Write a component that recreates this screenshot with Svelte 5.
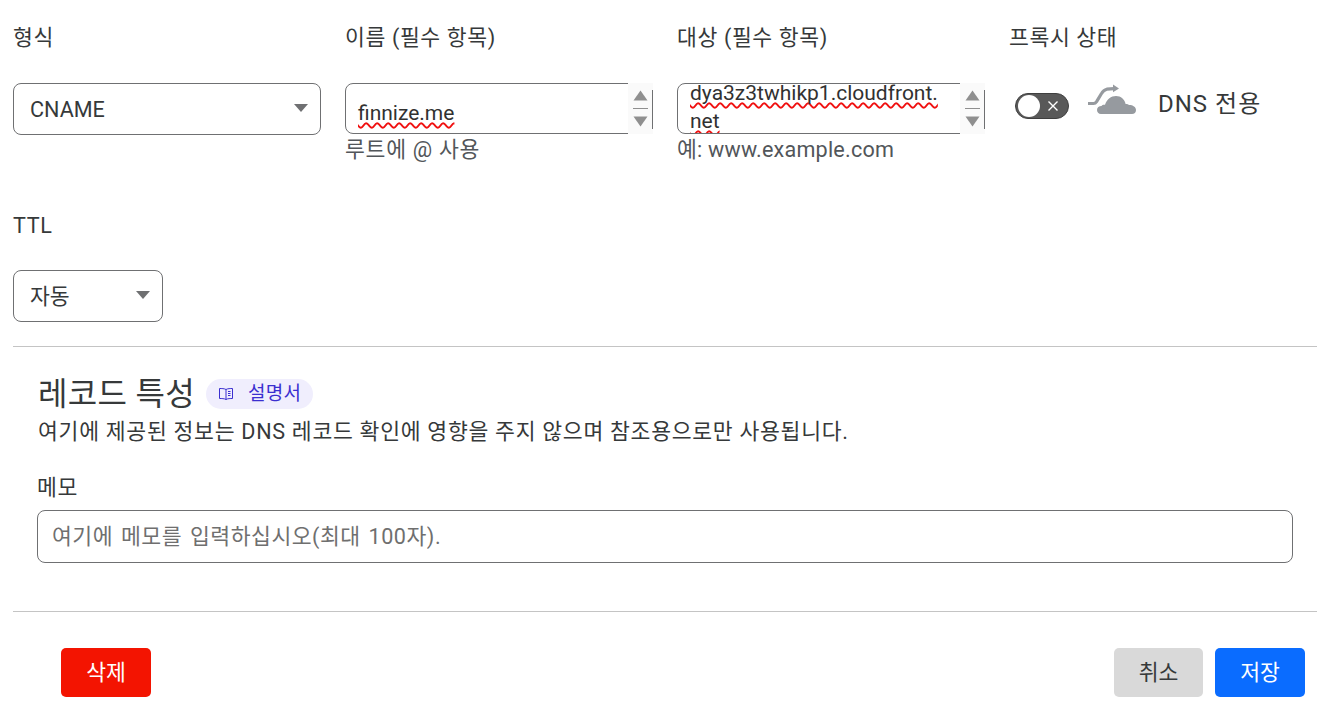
<script>
	let name = $state('finnize.me');
	let target = $state('dya3z3twhikp1.cloudfront.net');
	let type = $state('CNAME');
	let ttl = $state('자동');
	let comment = $state('');
	let proxied = $state(false);
</script>

{#snippet spinner()}
	<div class="spin">
		<svg width="15" height="11" viewBox="0 0 15 11"><path d="M7.5 0.5 14.5 10.5H0.5Z" fill="#8f8f8f" /></svg>
		<span class="spin-line"></span>
		<svg width="15" height="11" viewBox="0 0 15 11"><path d="M0.5 0.5H14.5L7.5 10.5Z" fill="#8f8f8f" /></svg>
	</div>
{/snippet}

{#snippet caret()}
	<svg class="caret" width="14" height="8" viewBox="0 0 14 8"><path d="M0 0H14L7 8Z" fill="#6f7072" /></svg>
{/snippet}

<div class="page">
	<div class="fields">
		<div class="field">
			<div class="label">형식</div>
			<div class="select wide">
				<select bind:value={type}>
					<option>CNAME</option>
					<option>A</option>
					<option>AAAA</option>
				</select>
				{@render caret()}
			</div>
		</div>
		<div class="field">
			<div class="label">이름 (필수 항목)</div>
			<div class="area">
				<div class="area-text single">{name}</div>
				{@render spinner()}
			</div>
			<div class="hint ko">루트에 @ 사용</div>
		</div>
		<div class="field">
			<div class="label">대상 (필수 항목)</div>
			<div class="area">
				<div class="area-text double">{target}</div>
				{@render spinner()}
			</div>
			<div class="hint">예: www.example.com</div>
		</div>
		<div class="field">
			<div class="label">프록시 상태</div>
			<div class="proxy">
				<button class="toggle" aria-label="프록시 상태" onclick={() => (proxied = !proxied)}>
					<span class="knob"></span>
					<svg width="12" height="12" viewBox="0 0 12 12"><path d="M1.5 1.5 10.5 10.5M10.5 1.5 1.5 10.5" stroke="#fff" stroke-width="1.4" /></svg>
				</button>
				<svg class="cloud" width="50" height="32" viewBox="0 0 50 32">
					<path d="M1 19.5H6.5C8 19.5 8.8 18.8 9.6 17.6L14.5 9.5C15.8 7.2 17.2 5.8 19.8 5.2L27 4.6" fill="none" stroke="#969a9f" stroke-width="3.2" />
					<path d="M26 0.6 32 4.4 26 8.2Z" fill="#969a9f" />
					<path d="M14 30C11.5 30 10 28.2 10 26 10 23.5 12 22 14.5 22 15.2 20.8 16.6 20.4 18 20.8 20 15.2 24 12 29 12 34 12 37.6 15.5 38.6 20 39.8 19.7 41.2 20 42 21 46 21 49 23 49 26 49 28.4 47.4 30 45 30Z" fill="#969a9f" />
				</svg>
				<span class="proxy-text">DNS 전용</span>
			</div>
		</div>
	</div>

	<div class="ttl">
		<div class="label">TTL</div>
		<div class="select narrow">
			<select bind:value={ttl}>
				<option>자동</option>
				<option>1분</option>
				<option>1시간</option>
			</select>
			{@render caret()}
		</div>
	</div>

	<hr class="rule-top" />

	<section class="props">
		<div class="heading">
			<h2>레코드 특성</h2>
			<span class="doc">
				<svg width="16" height="14" viewBox="0 0 16 14" fill="none" stroke="#3b2fd0" stroke-width="1">
					<path d="M8 2.5C6.5 1.5 3.5 1.5 1.5 1.5V11.5C3.5 11.5 6.5 11.5 8 12.5 9.5 11.5 12.5 11.5 14.5 11.5V1.5C12.5 1.5 9.5 1.5 8 2.5ZM8 2.5V12.5M10 4.5H12.5M10 6.5H12.5M10 8.5H12.5" />
				</svg>
				<span>설명서</span>
			</span>
		</div>
		<p class="desc">여기에 제공된 정보는 DNS 레코드 확인에 영향을 주지 않으며 참조용으로만 사용됩니다.</p>
		<div class="memo-label">메모</div>
		<input class="memo" bind:value={comment} placeholder="여기에 메모를 입력하십시오(최대 100자)." />
	</section>

	<hr class="rule-bottom" />

	<div class="actions">
		<button class="btn delete">삭제</button>
		<div class="right">
			<button class="btn cancel">취소</button>
			<button class="btn save">저장</button>
		</div>
	</div>
</div>

<style>
	:global(body) {
		margin: 0;
		background: #fff;
		color: #36393a;
		font-family: Roboto, 'Noto Sans CJK KR', sans-serif;
	}

	.page {
		width: 1304px;
		padding: 25px 0 0 13px;
		font-size: 21.6px;
		line-height: 26px;
	}

	.fields {
		display: grid;
		grid-template-columns: repeat(4, 332px);
		height: 188px;
	}

	.label {
		height: 26px;
		margin-bottom: 32px;
		letter-spacing: 0.6px;
	}

	.ttl .label {
		margin-bottom: 31px;
	}

	.select {
		position: relative;
		height: 52px;
	}

	.select.wide {
		width: 308px;
	}

	.select.narrow {
		width: 150px;
	}

	select {
		width: 100%;
		height: 100%;
		appearance: none;
		background: #fff;
		border: 1px solid #6f7072;
		border-radius: 8px;
		padding: 1px 16px 0;
		font: inherit;
		color: inherit;
	}

	.caret {
		position: absolute;
		right: 13px;
		top: 21px;
		pointer-events: none;
	}

	.area {
		display: flex;
		width: 308px;
		height: 51px;
		box-sizing: border-box;
		border: 1px solid #6f7072;
		border-radius: 8px;
	}

	.area-text {
		flex: 1;
		min-width: 0;
		padding: 0 12px;
		overflow: hidden;
		overflow-wrap: anywhere;
		font-size: 21px;
		color: #313131;
		text-decoration: underline wavy #f01010 1.5px;
		text-decoration-skip-ink: none;
		text-underline-offset: 1.5px;
	}

	.area-text.single {
		padding-top: 14px;
		line-height: 30px;
	}

	.area-text.double {
		margin-top: -5px;
		padding-top: 0;
		height: 54px;
		line-height: 28px;
	}

	.spin {
		position: relative;
		flex: none;
		width: 25px;
		margin: -1px -1px -1px 0;
		display: flex;
		flex-direction: column;
		align-items: center;
		justify-content: center;
		gap: 7px;
		background: #fafafa;
	}

	.spin::after {
		content: '';
		position: absolute;
		right: 0;
		top: 7px;
		bottom: 5px;
		width: 1px;
		background: #6f7072;
	}

	.spin-line {
		width: 15px;
		height: 1px;
		background: #8f8f8f;
	}

	.hint {
		margin-top: 3px;
		color: #52565a;
		letter-spacing: 0.2px;
	}

	.hint.ko {
		letter-spacing: 0.7px;
	}

	.proxy {
		display: flex;
		align-items: flex-start;
		height: 52px;
	}

	.toggle {
		margin: 10px 0 0 6px;
		width: 54px;
		height: 26px;
		padding: 0 0 0 2px;
		display: flex;
		align-items: center;
		gap: 7px;
		background: #595959;
		border: 1px solid #3f3f3f;
		border-radius: 13px;
		box-sizing: border-box;
	}

	.knob {
		width: 22px;
		height: 22px;
		border-radius: 50%;
		background: #fff;
	}

	.cloud {
		margin: 1px 0 0 18px;
	}

	.proxy-text {
		margin: 8px 0 0 21px;
		color: #36393a;
		font-size: 24px;
		letter-spacing: 1px;
	}

	.ttl {
		height: 133px;
	}

	hr {
		margin: 0;
		border: 0;
		border-top: 1px solid #c4c4c4;
	}

	.props {
		padding: 0 24px;
		height: 264px;
	}

	.heading {
		display: flex;
		align-items: center;
		gap: 11px;
		padding: 29px 0 0 1px;
		height: 36px;
	}

	h2 {
		margin: 0;
		font-size: 32px;
		font-weight: 400;
		line-height: 36px;
		letter-spacing: 0.3px;
	}

	.doc {
		display: flex;
		align-items: center;
		gap: 14px;
		height: 30px;
		padding: 0 12px;
		border-radius: 15px;
		background: #f0eefd;
		color: #3b2fd0;
		font-size: 19px;
		letter-spacing: 0.3px;
	}

	.desc {
		margin: 7px 0 0 1px;
		letter-spacing: 0.7px;
	}

	.memo-label {
		margin-top: 30px;
		margin-bottom: 9px;
		letter-spacing: 0.6px;
	}

	.memo {
		display: block;
		width: 100%;
		height: 53px;
		box-sizing: border-box;
		border: 1px solid #6f7072;
		border-radius: 8px;
		padding: 0 14px;
		font: inherit;
		letter-spacing: 0.5px;
		word-spacing: 2px;
		color: inherit;
	}

	.memo::placeholder {
		color: #6f6f6f;
		opacity: 1;
	}

	.actions {
		display: flex;
		justify-content: space-between;
		padding: 36px 12px 0 48px;
	}

	.right {
		display: flex;
		gap: 12px;
	}

	.btn {
		height: 49px;
		width: 90px;
		border: 0;
		border-radius: 5px;
		font: inherit;
		color: #fff;
	}

	.delete {
		background: #f31401;
	}

	.cancel {
		width: 89px;
		background: #d9d9d9;
		color: #36393a;
	}

	.save {
		background: #0a6cff;
	}
</style>
